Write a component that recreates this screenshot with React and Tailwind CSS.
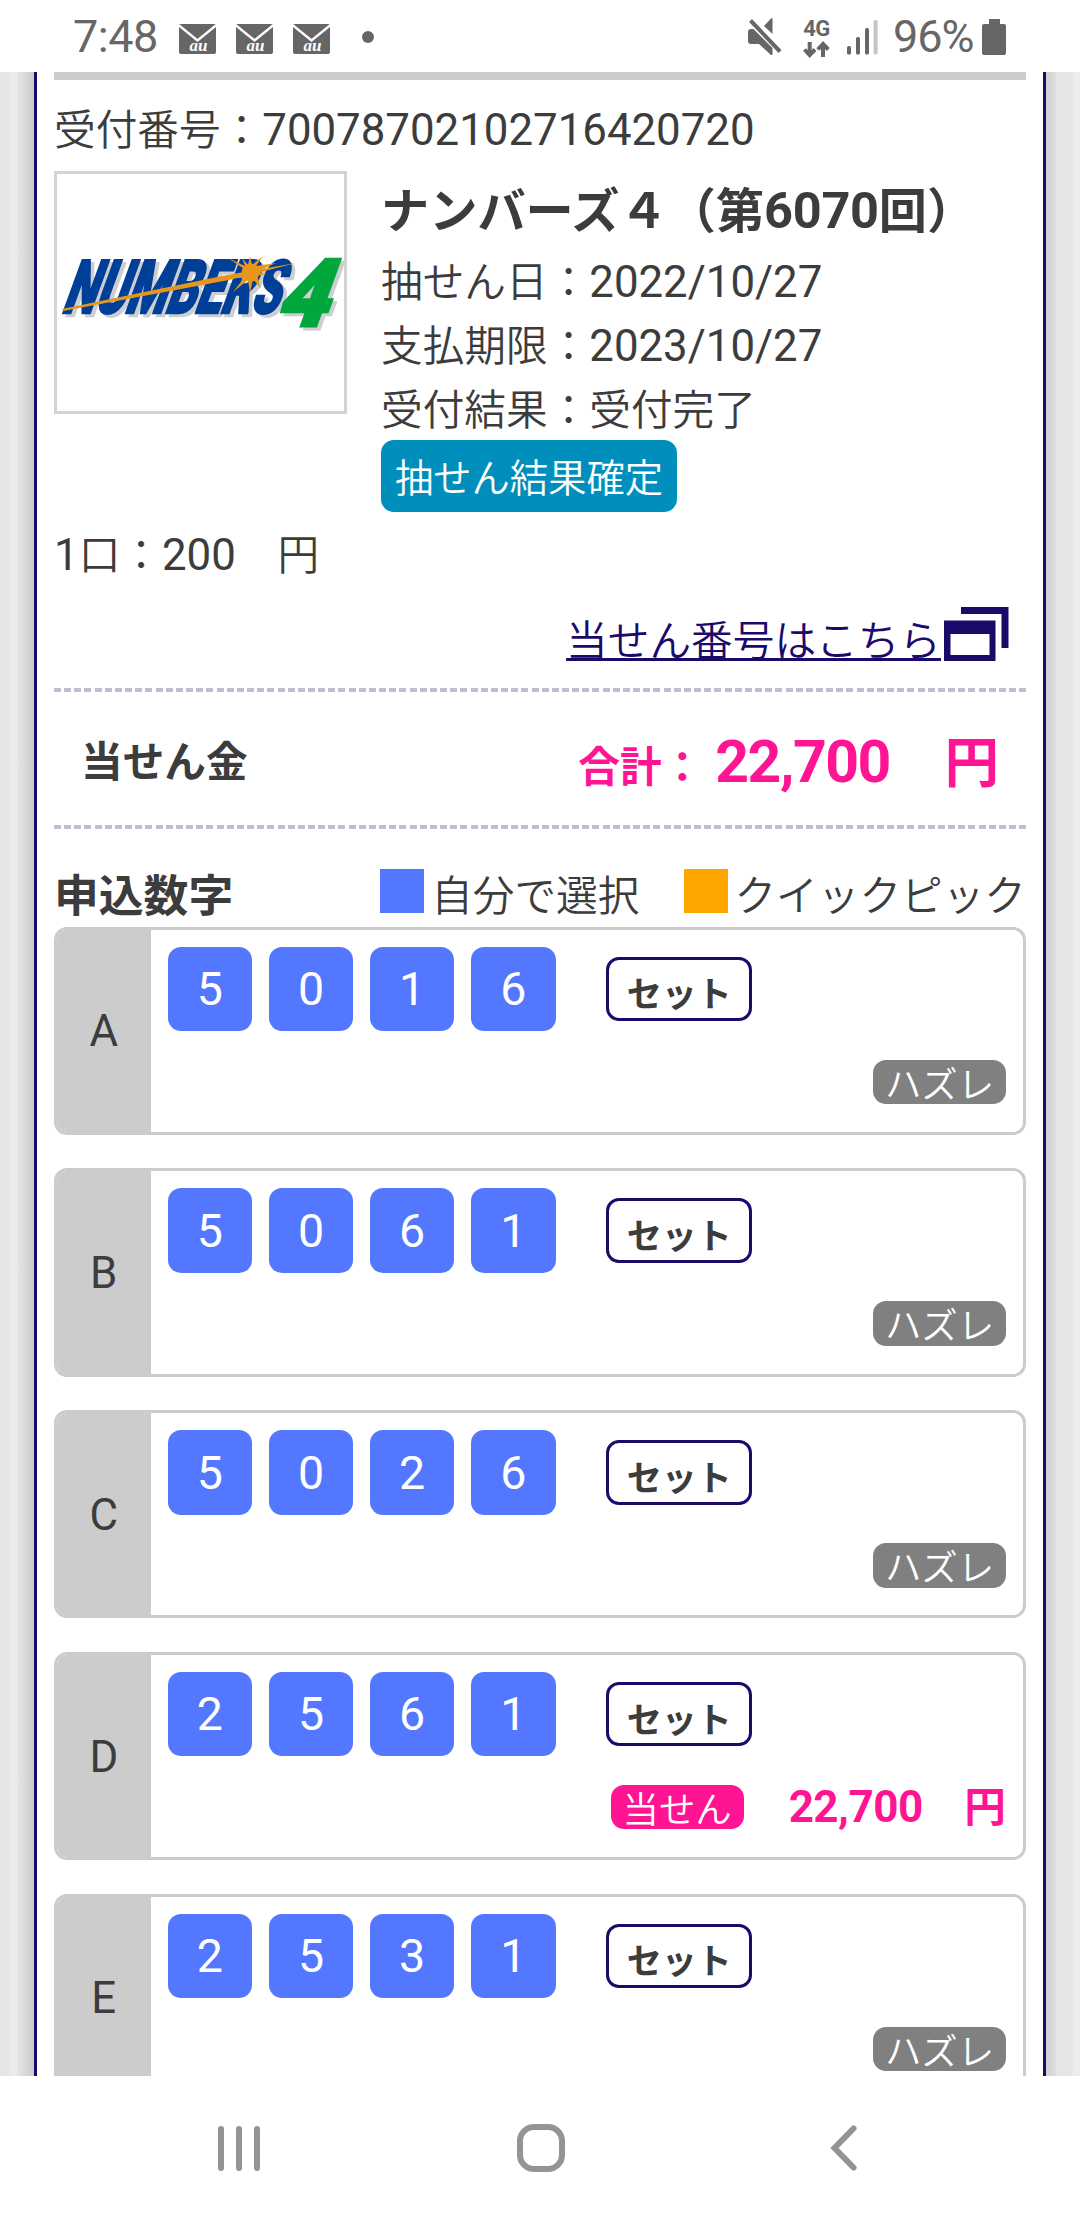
const CJK = "font-['Noto_Sans_CJK_JP',sans-serif]";
const LATIN = "font-['Roboto',sans-serif]";

// Japanese run: set slightly smaller than the Latin run beside it.
function J({ className = "text-[41.67px]", children }) {
  return <span className={`${CJK} whitespace-pre ${className}`}>{children}</span>;
}

function N({ className = "text-[43.8px] font-normal", children }) {
  return <span className={`${LATIN} whitespace-pre ${className}`}>{children}</span>;
}

function Line({ className = "", children }) {
  return <div className={`flex h-16 items-baseline leading-[64px] ${className}`}>{children}</div>;
}

function MailIcon() {
  return (
    <svg width="37" height="30" viewBox="0 0 37 30" className="shrink-0">
      <rect x="0" y="0" width="37" height="30" rx="2" fill="#666" />
      <path d="M0 1.5 L18.5 16.5 L37 1.5" fill="none" stroke="#fff" strokeWidth="2.4" />
      <text x="19.500" y="26.500" textAnchor="middle" fill="#fff" fontFamily="Liberation Serif, serif" fontStyle="italic" fontWeight="700" fontSize="17" textLength="18">au</text>
    </svg>
  );
}

function StatusBar() {
  return (
    <header className={`flex h-[72px] items-center bg-white text-[#666] ${LATIN}`}>
      <span className="ml-[73px] w-[106px] pt-[2px] text-[45px] leading-[72px] tracking-[-0.5px]">7:48</span>
      <div className="mt-[5px] flex gap-5">
        <MailIcon />
        <MailIcon />
        <MailIcon />
      </div>
      <span className="ml-[32px] mt-[2px] size-3 rounded-full bg-[#666]" />
      <div className="ml-auto flex items-center">
        <svg width="34" height="38" viewBox="0 0 34 38" fill="#666" className="mt-[2px]">
          <path d="M0 14 q0 -3 3 -3 H5.5 L24.5 30 V37 H23 L11 26 H3 q-3 0 -3 -3 Z" />
          <path d="M24.5 0 V16 L16 8 L23 0.6 Z" />
          <path d="M2.5 2.5 L32 33.5" stroke="#666" strokeWidth="4" />
        </svg>
        <div className="ml-[20px] mt-[4px] flex w-[29px] flex-col items-center">
          <span className="text-[22px] font-bold leading-[20px] tracking-[-0.6px]">4G</span>
          <svg width="27" height="17" viewBox="0 0 27 17" fill="none" stroke="#666" strokeWidth="4" className="mt-[2px]">
            <path d="M6.7 1 V14 M1.5 8.5 L6.7 14 L12 8.5" />
            <path d="M20 16 V3 M14.8 8.5 L20 3 L25.3 8.5" />
          </svg>
        </div>
        <svg width="31" height="36" viewBox="0 0 31 36" className="ml-[16px] mt-[2px]" fill="#666">
          <rect x="0" y="27" width="4" height="8.5" rx="1.6" />
          <rect x="9" y="18" width="4" height="17.5" rx="1.6" />
          <rect x="18" y="9" width="4" height="26.5" rx="1.6" />
          <rect x="26.6" y="1" width="4" height="34.5" rx="1.6" fill="#c4c4c4" />
        </svg>
        <span className="ml-[15px] w-[89px] whitespace-nowrap pt-[2px] text-[45px] leading-[72px] tracking-[-1px]">96%</span>
        <svg width="24" height="36" viewBox="0 0 24 36" className="mr-[74px] mt-[2px]" fill="#666">
          <path d="M7 0 H18 V5 H22 q2 0 2 2 V34 q0 2 -2 2 H2 q-2 0 -2 -2 V7 q0 -2 2 -2 H7 Z" />
        </svg>
      </div>
    </header>
  );
}

function NumbersLogo() {
  const word = {
    fontFamily: "Roboto, sans-serif",
    fontWeight: 900,
    fontSize: 74,
    textLength: 217,
    lengthAdjust: "spacingAndGlyphs",
  };
  const four = {
    fontFamily: "Roboto, sans-serif",
    fontWeight: 900,
    fontSize: 94,
    textLength: 52,
    lengthAdjust: "spacingAndGlyphs",
  };
  return (
    <svg width="287" height="237" viewBox="0 0 287 237" className="overflow-visible">
      <g transform="translate(7 141.500) skewX(-20)" fill="#cdced2" stroke="#cdced2" strokeWidth="2.500">
        <text x="0" y="0" {...word}>NUMBERS</text>
      </g>
      <g transform="translate(3.500 138.500) skewX(-20)" fill="#003f98" stroke="#003f98" strokeWidth="2.500">
        <text x="0" y="0" {...word}>NUMBERS</text>
      </g>
      <path d="M5 135 L170 101 L239 89 L172 106 L6 137 Z" fill="#e8961a" />
      <path
        d="M193 99 L171 84 L188 92 L185 84 L191 91 L193 82 L195 91 L206 82 L199 92 L219 89 L201 97 L209 101 L200 101 L204 115 L196 105 L193 119 L191 106 L176 118 L187 104 L178 104 Z"
        fill="#e8961a"
      />
      <circle cx="193.500" cy="98.500" r="9" fill="#e8961a" />
      <g transform="translate(219.500 155) skewX(-20)" fill="#cdced2" stroke="#cdced2" strokeWidth="3">
        <text x="0" y="0" {...four}>4</text>
      </g>
      <g transform="translate(216 151.500) skewX(-20)" fill="#00a73c" stroke="#00a73c" strokeWidth="3">
        <text x="0" y="0" {...four}>4</text>
      </g>
    </svg>
  );
}

function WindowIcon() {
  return (
    <svg width="68" height="56" viewBox="0 0 68 56" className="shrink-0" fill="#1c0a6b">
      <path d="M20 1 H67.500 V42 H60.500 V8 H20 Z" />
      <path fillRule="evenodd" d="M3 14.500 H54.500 V55 H3 Z M9.500 28 V49 H48.500 V28 Z" />
    </svg>
  );
}

function Dashes() {
  return (
    <div className="h-1 bg-[repeating-linear-gradient(90deg,#c1bad0_0px,#c1bad0_7px,#ffffff_7px,#ffffff_10.16px)]" />
  );
}

function Tag({ className, children }) {
  return (
    <span className={`${CJK} flex h-[44.4px] w-[133px] items-center justify-center rounded-[13px] text-[36.4px] font-[350] leading-none text-white ${className}`}>
      {children}
    </span>
  );
}

function EntryCard({ label, digits, prize }) {
  return (
    <section className="mb-[33.4px] flex h-[208.4px] shrink-0 overflow-hidden rounded-[13px] border-[3px] border-[#ccc] bg-white">
      <div className={`flex w-[93.5px] items-center justify-center bg-[#ccc] pt-[3px] text-[43.8px] ${LATIN}`}>{label}</div>
      <div className="flex flex-1 flex-col pl-[17px] pr-[17px] pt-[17px]">
        <div className="flex items-start gap-[16.6px]">
          {digits.split("").map((d, i) => (
            <span
              key={i}
              className={`flex size-[84.6px] items-center justify-center rounded-[13px] bg-[#5378ff] pt-px text-[46.500px] leading-none text-white ${LATIN}`}
            >
              {d}
            </span>
          ))}
          <span className={`${CJK} ml-[34px] mt-[10px] flex h-[64.6px] w-[146px] items-center justify-center rounded-[13px] border-[3px] border-[#1c0a6b] pt-[6px] text-[35px] font-bold leading-none`}>
            セット
          </span>
        </div>
        <div className="mt-[28.6px] flex h-[44.4px] items-center justify-end">
          {prize ? (
            <>
              <Tag className="bg-[#ff1493]">当せん</Tag>
              <Line className="mb-[6px] ml-[45px] font-bold text-[#ff1493]">
                <N className="text-[44px] tracking-[-0.5px]">{prize}</N>
                <J>{"　円"}</J>
              </Line>
            </>
          ) : (
            <Tag className="bg-[#808080]">ハズレ</Tag>
          )}
        </div>
      </div>
    </section>
  );
}

const entries = [
  { label: "A", digits: "5016" },
  { label: "B", digits: "5061" },
  { label: "C", digits: "5026" },
  { label: "D", digits: "2561", prize: "22,700" },
  { label: "E", digits: "2531" },
];

function NavBar() {
  return (
    <nav className="flex h-36 items-center justify-between bg-white pl-[218px] pr-[222px]">
      <div className="flex gap-3">
        <span className="h-[45px] w-1.5 rounded-full bg-[#949494]" />
        <span className="h-[45px] w-1.5 rounded-full bg-[#949494]" />
        <span className="h-[45px] w-1.5 rounded-full bg-[#949494]" />
      </div>
      <span className="mr-[8px] size-12 rounded-[17px] border-[6px] border-[#949494]" />
      <svg width="28" height="48" viewBox="0 0 28 48" fill="none" stroke="#949494" strokeWidth="6" strokeLinecap="round">
        <path d="M23.500 4.500 L4.500 24 L23.500 43.500" />
      </svg>
    </nav>
  );
}

export default function App() {
  return (
    <div className="flex h-[2220px] w-[1080px] flex-col overflow-hidden bg-white text-[#3c3c3c]">
      <StatusBar />
      <main className="flex h-[2004px] overflow-hidden">
        <div className="flex w-[34px] shrink-0">
          <div className="w-[10px] bg-[#e6e6e6]" />
          <div className="w-[7px] bg-[#ebebeb]" />
          <div className="flex-1 bg-linear-to-r from-[#e6e6e6] to-[#cbcbcb]" />
        </div>
        <div className="flex w-[1012px] shrink-0 flex-col border-x-[3px] border-[#1c0a6b] bg-white px-[17px]">
          <div className="h-[7.500px] shrink-0 bg-[#ccc]" />
          <Line className="mt-[15.500px] shrink-0 font-[350]">
            <J>受付番号：</J>
            <N>70078702102716420720</N>
          </Line>

          <div className="mt-[12px] flex shrink-0 gap-[34px]">
            <div className="h-[243px] w-[293px] border-[3px] border-[#d3d3d3]">
              <NumbersLogo />
            </div>
            <div>
              <Line className="mt-1 font-bold">
                <J className="text-[48.2px]">ナンバーズ４（第</J>
                <N className="text-[50.500px] tracking-[-0.3px]">6070</N>
                <J className="text-[48.2px]">回）</J>
              </Line>
              <Line className="mt-2 font-[350]">
                <J>抽せん日：</J>
                <N>2022/10/27</N>
              </Line>
              <Line className="font-[350]">
                <J>支払期限：</J>
                <N>2023/10/27</N>
              </Line>
              <Line className="font-[350]">
                <J>受付結果：受付完了</J>
              </Line>
              <div className={`${CJK} mt-px flex h-[71.500px] w-[296px] items-center justify-center rounded-[13px] bg-[#008fbc] text-[38.3px] font-[350] leading-none text-white`}>
                抽せん結果確定
              </div>
            </div>
          </div>

          <Line className="mt-2 shrink-0 font-[350]">
            <N>1</N>
            <J>口：</J>
            <N>200</N>
            <J>{"　円"}</J>
          </Line>

          <a className="mt-[22px] flex h-16 shrink-0 justify-end pr-[17px] text-[#1c0a6b]">
            <span className={`${CJK} text-[41.67px] font-[350] leading-[64px] underline decoration-[3px] underline-offset-[2px] [text-decoration-skip-ink:none]`}>
              当せん番号はこちら
            </span>
            <WindowIcon />
          </a>

          <div className="mt-[18px] shrink-0">
            <Dashes />
            <div className="flex h-[133px] items-center justify-between pl-[27px] pr-[27px] pt-[2px] font-bold">
              <J className="text-[41.67px] leading-[64px]">当せん金</J>
              <Line className="text-[#ff1493]">
                <J>合計：</J>
                <N className="ml-[12px] text-[59px] tracking-[-1.5px]">22,700</N>
                <J className="text-[54.500px]">{"　円"}</J>
              </Line>
            </div>
            <Dashes />
          </div>

          <div className="mb-[3px] mt-[31px] flex h-16 shrink-0 items-start">
            <J className="text-[44.8px] font-bold leading-[66px]">申込数字</J>
            <span className="ml-auto mt-[9px] size-11 bg-[#5378ff]" />
            <J className="ml-[7px] text-[41.67px] font-[350] leading-[66px]">自分で選択</J>
            <span className="ml-[45px] mt-[9px] size-11 bg-[#ffa500]" />
            <J className="ml-[6px] text-[41.67px] font-[350] leading-[66px]">クイックピック</J>
          </div>

          {entries.map((entry) => (
            <EntryCard key={entry.label} {...entry} />
          ))}
        </div>
        <div className="flex flex-1">
          <div className="w-[10px] bg-linear-to-r from-[#cecece] to-[#dedede]" />
          <div className="w-[17px] bg-[#e6e6e6]" />
          <div className="flex-1 bg-[#ececec]" />
        </div>
      </main>
      <NavBar />
    </div>
  );
}
